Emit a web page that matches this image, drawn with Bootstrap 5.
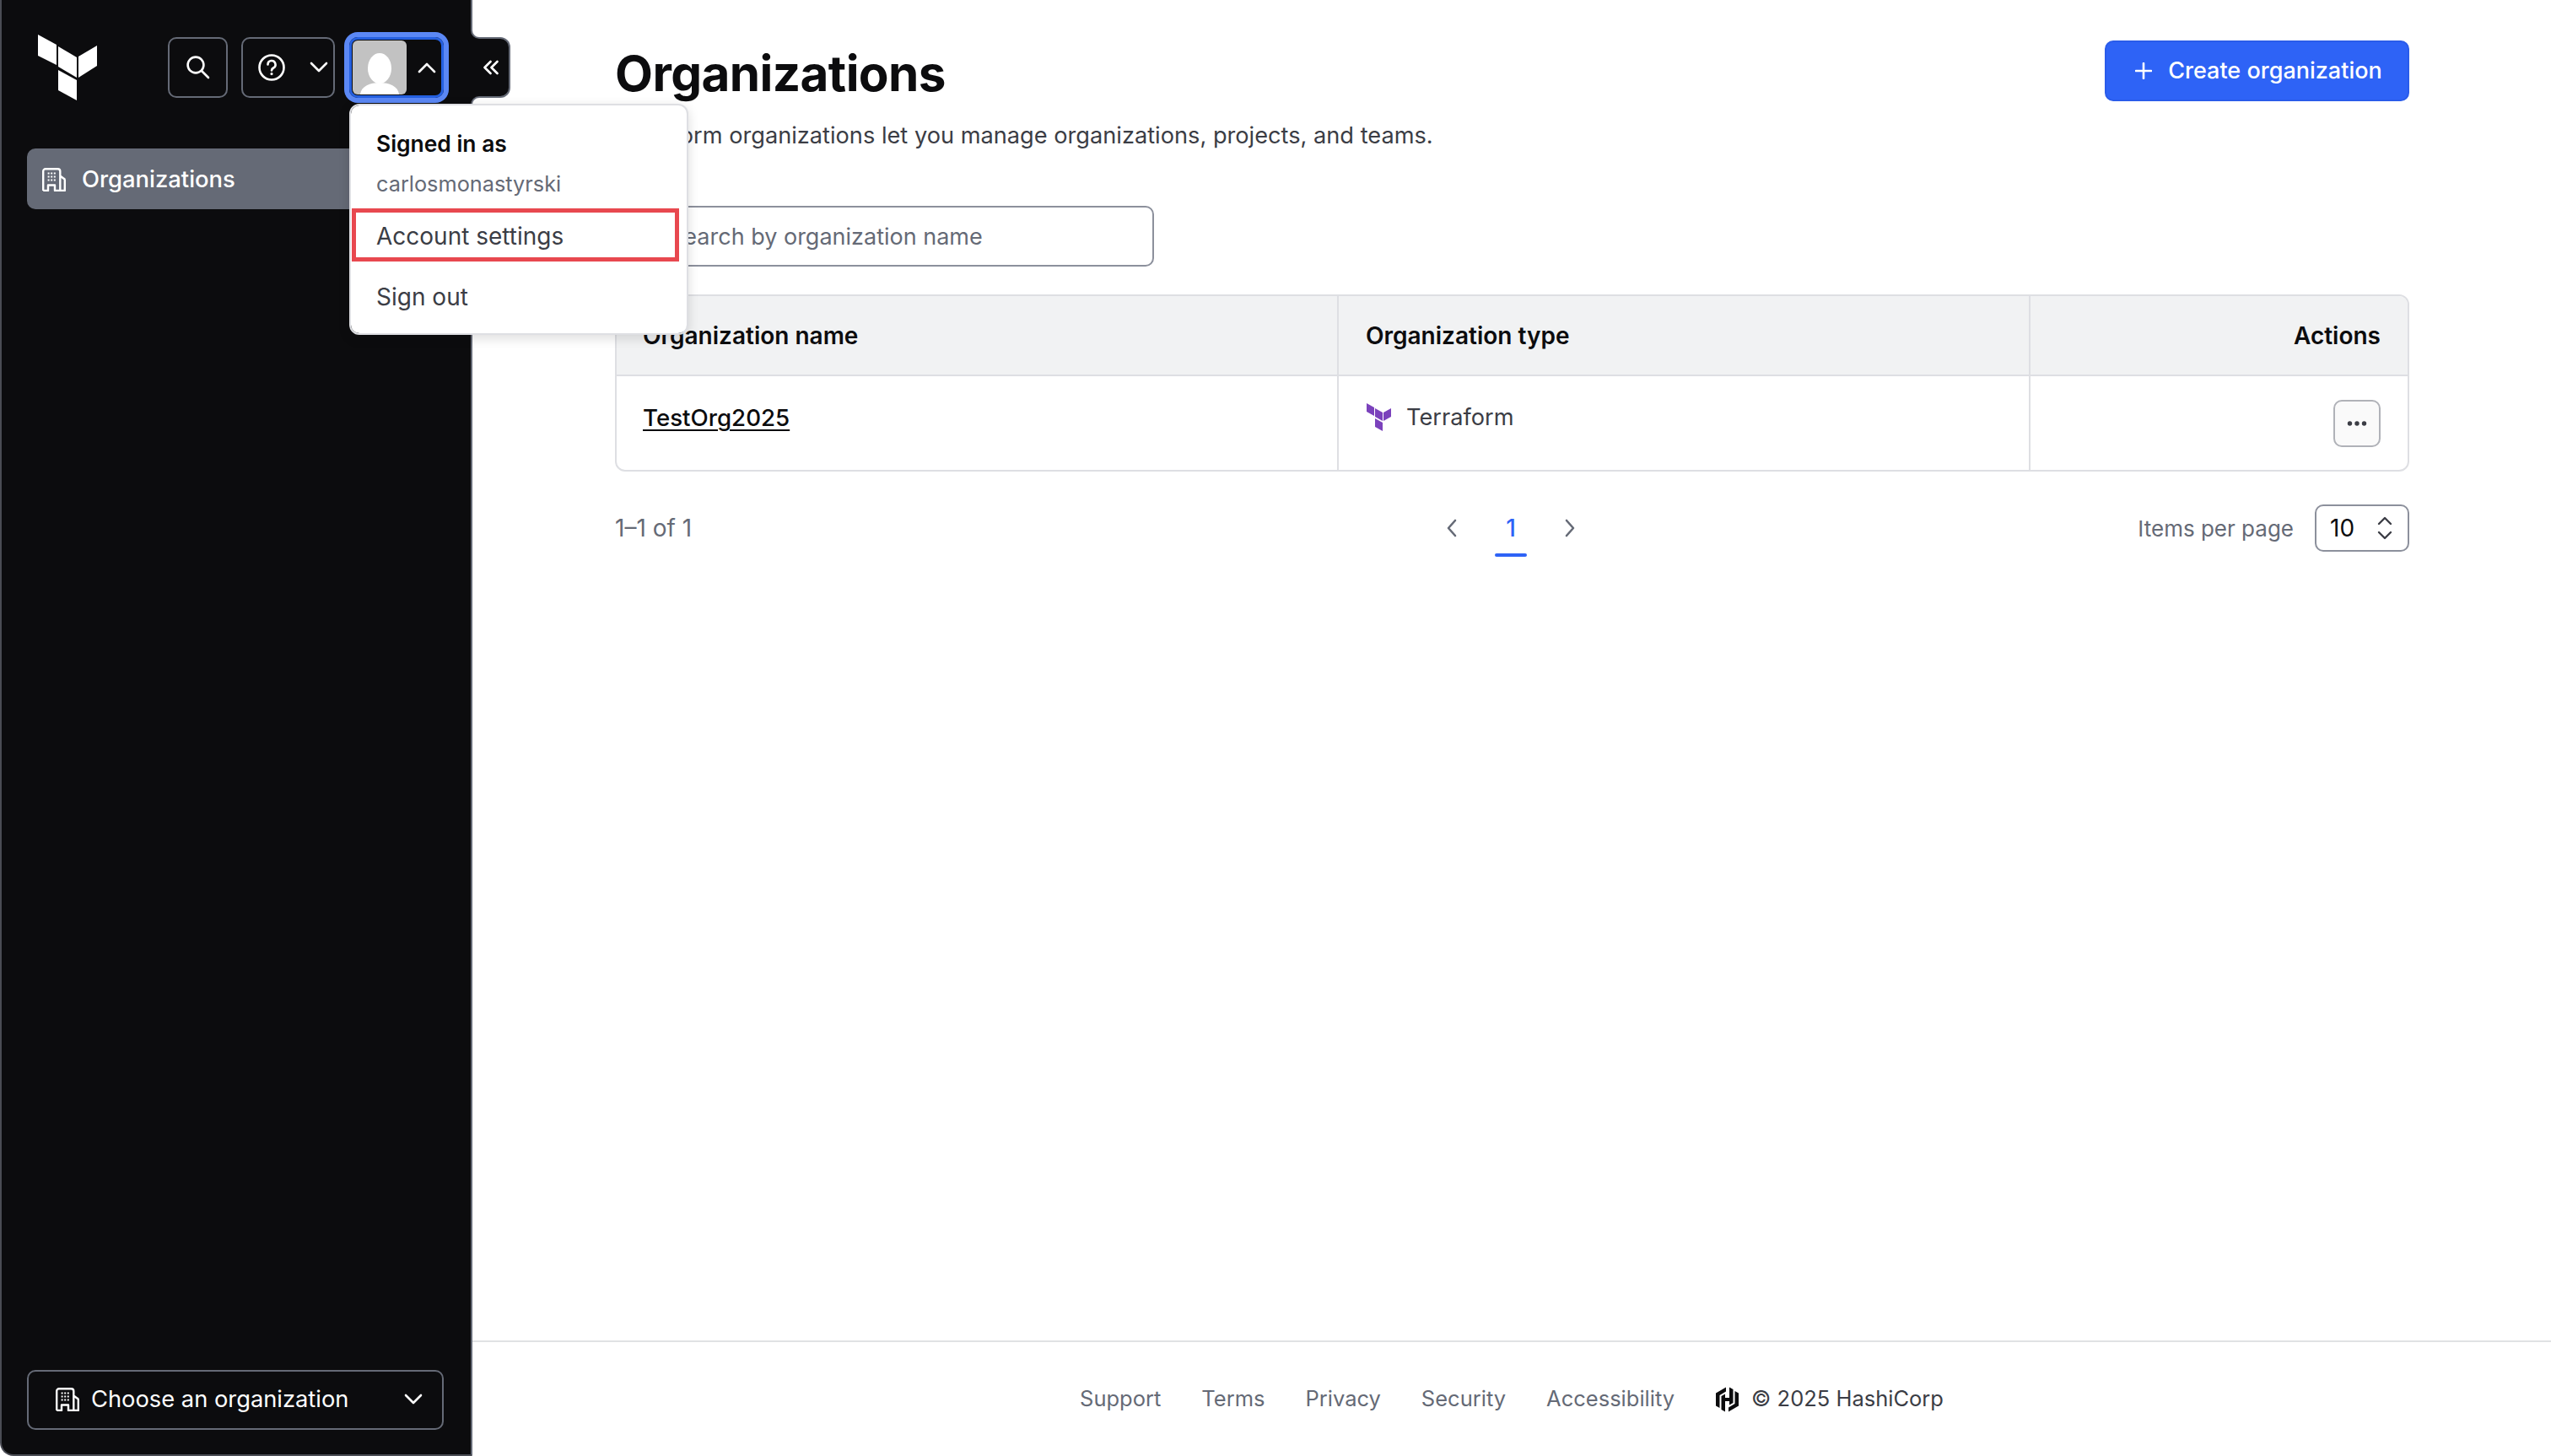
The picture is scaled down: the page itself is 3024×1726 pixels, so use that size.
<!DOCTYPE html>
<html lang="en">
<head>
<meta charset="utf-8">
<title>Organizations</title>
<link rel="stylesheet" href="https://cdn.jsdelivr.net/npm/bootstrap@5.3.0/dist/css/bootstrap.min.css">
<style>
html,body{height:100%;}
body{font-family:Inter,"Liberation Sans",sans-serif;font-size:28px;color:#3b3d45;background:#fff;}
.shell{height:1726px;overflow:hidden;}
.side{width:560px;flex:0 0 560px;background:#0c0c0e;border-left:2px solid #4a4c54;border-right:2px solid #656a76;border-bottom:2px solid #4a4c54;border-bottom-left-radius:16px;padding:38px 32px 29px 30px;position:relative;color:#fff;}
.side-head{height:84px;}
.brand-logo{width:84px;height:84px;margin-right:83px;flex:none;}
.tool{height:72px;border:2px solid #656a76;border-radius:10px;background:transparent;padding:0;color:#fff;}
.tool-search{width:71px;}
.tool-help{width:111px;margin-left:16px;padding:0 5px 0 18px;}
.tool-user{width:112px;margin-left:17px;border:3px solid #2560e0;box-shadow:0 0 0 6px #5b88f5;padding:1px 5px 1px 1px;}
.avatar{width:64px;height:64px;border-radius:6px;display:block;}
.nav-current{height:72px;margin-top:54px;background:#656a76;border-radius:10px;padding:2px 18px 0;gap:19px;color:#fff;font-weight:500;font-size:27.4px;}
.org-pick{height:71px;border:2px solid #656a76;border-radius:10px;padding:0 22px 1px 32px;color:#fff;background:transparent;font-size:27.3px;font-weight:400;gap:14px;}
.org-pick:hover{color:#fff;border-color:#656a76;}
.collapse-tab{position:absolute;left:558px;top:44px;width:47px;height:72px;background:#0c0c0e;border:2px solid #656a76;border-left:0;border-radius:0 12px 12px 0;z-index:3;padding-left:2px;}
.notch{position:absolute;left:558px;width:10px;height:10px;background:#0c0c0e;z-index:4;}
.notch::after{content:"";position:absolute;inset:0;background:#fff;border-left:2px solid #656a76;}
.notch-a{top:36px;}.notch-a::after{border-bottom:2px solid #656a76;border-bottom-left-radius:10px;}
.notch-b{top:114px;}.notch-b::after{border-top:2px solid #656a76;border-top-left-radius:10px;}
.page-wrap{min-width:0;}
.page-body{padding:48px 168px 0 169px;}
.page-title{font-size:58.4px;font-weight:700;line-height:78px;color:#0c0c0e;letter-spacing:-.6px;margin:0;}
.page-sub{font-size:27.2px;line-height:40px;margin:15px 0 0;color:#3b3d45;}
.btn-create{height:72px;width:361px;background:#2e63f6;border:2px solid #2a5cea;border-radius:10px;color:#fff;font-size:27px;font-weight:500;padding:0 0 0 4px;gap:19px;}
.btn-create:hover{background:#2e63f6;color:#fff;}
.search-box{width:639px;height:72px;margin-top:63px;}
.search-box .form-control{height:72px;border:2px solid #8c909c;border-radius:10px;padding:0 20px 0 62px;font-size:27px;color:#3b3d45;box-shadow:none;}
.search-box .form-control::placeholder{color:#656a76;}
.search-glyph{position:absolute;left:18px;top:20px;}
.data-wrap{margin-top:33px;border:2px solid #dedfe3;border-radius:12px;overflow:hidden;}
.data-wrap .table{margin:0;table-layout:fixed;font-size:28px;--bs-table-border-color:#dedfe3;}
.col-name{width:855px;}
.col-type{width:820px;}
.data-wrap th{background:#f1f2f3;color:#0c0c0e;font-weight:600;height:94px;padding:0 32px;vertical-align:middle;border-bottom:2px solid #dedfe3;}
.data-wrap td{height:112px;padding:28px 32px 0;vertical-align:top;border-bottom:0;color:#3b3d45;}
.data-wrap th:first-child,.data-wrap td:first-child{padding-left:31px;}
.data-wrap th + th,.data-wrap td + td{border-left:2px solid #dedfe3;}
.org-link{display:inline-block;line-height:38px;color:#0c0c0e;font-weight:500;font-size:27.7px;text-decoration-thickness:2px;text-underline-offset:4px;}
.type-name{font-size:27.2px;padding-top:1px;}
.type-mark{width:32px;height:34px;margin-right:16px;flex:none;}
.more-btn{width:56px;height:56px;padding:0;margin-top:-1px;border:2px solid #b0b2b8;border-radius:10px;background:#fafafa;}
.pager{margin-top:35px;height:64px;color:#656a76;position:relative;}
.pager-nums{position:absolute;left:985px;top:0;height:64px;}
.pager-num{width:38px;margin:0 44px;height:64px;line-height:64px;text-align:center;color:#2e63f6;font-weight:500;position:relative;}
.pager-num::after{content:"";position:absolute;left:0;right:0;bottom:-2px;height:4px;border-radius:2px;background:#2e63f6;}
.per-label{font-size:26px;}
.per-select{width:112px;height:56px;border:2px solid #8c909c;border-radius:10px;margin-left:25px;padding:0 18px 0 16px;color:#0c0c0e;}
.site-foot{margin-top:auto;height:137px;border-top:2px solid #e0e2e4;gap:48px;color:#656a76;font-size:25.5px;}
.site-foot a{color:#656a76;text-decoration:none;}
.copy-note{color:#3b3d45;gap:14px;}
.acct-menu{position:absolute;left:414px;top:123px;width:402px;height:274px;padding:0;border:2px solid #dedfe3;border-radius:12px;box-shadow:0 4px 14px rgba(12,12,14,.14);font-size:28px;z-index:5;}
.acct-who{padding:26px 30px 0;height:122px;}
.acct-label{font-weight:600;color:#0c0c0e;line-height:38px;font-size:26.4px;}
.acct-name{color:#656a76;line-height:38px;margin-top:10px;font-size:25.3px;}
.acct-item{font-size:28px;padding:0 0 0 30px;color:#3b3d45;line-height:62px;}
.acct-hot{margin:0 9px 0 1px;width:388px;border:5px solid #e8484f;line-height:57px;padding-left:24px;height:63px;}
.acct-hot + .acct-item{margin-top:11px;height:62px;}
</style>
</head>
<body>
<div class="shell d-flex">
  <aside class="side d-flex flex-column">
    <div class="side-head d-flex align-items-center">
      <svg class="brand-logo" viewBox="0 0 84 84"><g fill="#fff" transform="translate(-32 -38)"><polygon points="45,41 67,53 67,77 45,66"/><polygon points="69,55 91,68 91,92 69,79"/><polygon points="93,67 115,54 115,78 93,92"/><polygon points="69,83 91,95 91,119 69,107"/></g></svg>
      <button class="tool tool-search d-flex align-items-center justify-content-center" aria-label="Search"><svg width="32" height="32" viewBox="0 0 32 32" fill="none" stroke="#fff" stroke-width="2.6" stroke-linecap="round"><circle cx="13" cy="13" r="9.4"/><line x1="20" y1="20" x2="28" y2="28"/></svg></button>
      <button class="tool tool-help d-flex align-items-center justify-content-between" aria-label="Help">
        <svg width="32" height="32" viewBox="0 0 32 32" fill="none" stroke="#fff" stroke-width="2.6" stroke-linecap="round"><circle cx="16" cy="16" r="14.5"/><path d="M11.5 12.5a4.5 4.5 0 1 1 6.6 4c-1.4.8-2.1 1.6-2.1 3"/><circle cx="16" cy="23.6" r="1" fill="#fff" stroke-width="1.2"/></svg>
        <svg width="24" height="24" viewBox="0 0 24 24" fill="none" stroke="#fff" stroke-width="2.6" stroke-linecap="round" stroke-linejoin="round"><path d="M3 7l9 9 9-9"/></svg>
      </button>
      <button class="tool tool-user d-flex align-items-center justify-content-between" aria-label="User">
        <svg class="avatar" viewBox="0 0 64 64"><rect width="64" height="64" fill="#c2c2c2"/><ellipse cx="32" cy="33" rx="14" ry="18" fill="#fff"/><path d="M9 64c1-10 12-14 23-14s22 4 23 14z" fill="#fff"/></svg>
        <svg width="24" height="24" viewBox="0 0 24 24" fill="none" stroke="#fff" stroke-width="2.6" stroke-linecap="round" stroke-linejoin="round"><path d="M3 17l9-9 9 9"/></svg>
      </button>
    </div>
    <div class="nav-current d-flex align-items-center">
      <svg width="28" height="28" viewBox="0 0 28 28" fill="none" stroke="#fff" stroke-width="2.4" stroke-linejoin="round"><path d="M1.2 27V4A2.8 2.8 0 0 1 4 1.2h14.5A2.8 2.8 0 0 1 21.3 4v23M21.3 9.5l4 3a2 2 0 0 1 1.5 2V27h-5.5M1.2 27H7v-6.5h8V27h6.3"/><g fill="#fff" stroke="none"><rect x="6.6" y="5.5" width="2" height="2"/><rect x="10.2" y="5.5" width="2" height="2"/><rect x="13.8" y="5.5" width="2" height="2"/><rect x="6.6" y="9.5" width="2" height="2"/><rect x="10.2" y="9.5" width="2" height="2"/><rect x="13.8" y="9.5" width="2" height="2"/><rect x="6.6" y="13.5" width="2" height="2"/><rect x="10.2" y="13.5" width="2" height="2"/><rect x="13.8" y="13.5" width="2" height="2"/></g></svg>
      <span>Organizations</span>
    </div>
    <button class="btn org-pick d-flex align-items-center mt-auto w-100">
      <svg width="28" height="28" viewBox="0 0 28 28" fill="none" stroke="#fff" stroke-width="2.4" stroke-linejoin="round"><path d="M1.2 27V4A2.8 2.8 0 0 1 4 1.2h14.5A2.8 2.8 0 0 1 21.3 4v23M21.3 9.5l4 3a2 2 0 0 1 1.5 2V27h-5.5M1.2 27H7v-6.5h8V27h6.3"/><g fill="#fff" stroke="none"><rect x="6.6" y="5.5" width="2" height="2"/><rect x="10.2" y="5.5" width="2" height="2"/><rect x="13.8" y="5.5" width="2" height="2"/><rect x="6.6" y="9.5" width="2" height="2"/><rect x="10.2" y="9.5" width="2" height="2"/><rect x="13.8" y="9.5" width="2" height="2"/><rect x="6.6" y="13.5" width="2" height="2"/><rect x="10.2" y="13.5" width="2" height="2"/><rect x="13.8" y="13.5" width="2" height="2"/></g></svg>
      <span>Choose an organization</span>
      <svg class="ms-auto" width="24" height="24" viewBox="0 0 24 24" fill="none" stroke="#fff" stroke-width="2.6" stroke-linecap="round" stroke-linejoin="round"><path d="M3 7l9 9 9-9"/></svg>
    </button>
  </aside>
  <span class="notch notch-a"></span><span class="notch notch-b"></span>
  <div class="collapse-tab d-flex align-items-center justify-content-center"><svg width="18" height="18" viewBox="0 0 18 18" fill="none" stroke="#fff" stroke-width="2.6" stroke-linecap="round" stroke-linejoin="round"><path d="M8.5 2l-7 7 7 7M16.5 2l-7 7 7 7"/></svg></div>
  <div class="page-wrap flex-grow-1 d-flex flex-column">
    <main class="page-body">
      <div class="d-flex justify-content-between align-items-start">
        <h1 class="page-title">Organizations</h1>
        <a class="btn btn-create d-flex align-items-center justify-content-center"><svg width="20" height="20" viewBox="0 0 20 20" stroke="#fff" stroke-width="2.6" stroke-linecap="round"><path d="M10 1v18M1 10h18"/></svg><span>Create organization</span></a>
      </div>
      <p class="page-sub">Terraform organizations let you manage organizations, projects, and teams.</p>
      <div class="search-box position-relative">
        <svg class="search-glyph" width="32" height="32" viewBox="0 0 32 32" fill="none" stroke="#656a76" stroke-width="2.6" stroke-linecap="round"><circle cx="13" cy="13" r="9.4"/><line x1="20" y1="20" x2="28" y2="28"/></svg>
        <input class="form-control" placeholder="Search by organization name">
      </div>
      <div class="data-wrap">
        <table class="table align-top">
          <colgroup><col class="col-name"><col class="col-type"><col></colgroup>
          <thead><tr><th>Organization name</th><th>Organization type</th><th class="text-end">Actions</th></tr></thead>
          <tbody><tr>
            <td><a class="org-link" href="#">TestOrg2025</a></td>
            <td><div class="d-flex align-items-center"><svg class="type-mark" viewBox="0 0 32 34"><g fill="#7b42bc"><polygon points="1,0 10,5 10,15 1,10"/><polygon points="11,6 20,11 20,21 11,16"/><polygon points="21,11 30,6 30,16 21,21"/><polygon points="11,18 20,23 20,33 11,28"/></g></svg><span class="type-name">Terraform</span></div></td>
            <td class="text-end"><button class="more-btn d-inline-flex align-items-center justify-content-center" aria-label="More"><svg width="24" height="6" viewBox="0 0 24 6" fill="#3b3d45"><circle cx="3.5" cy="3" r="2.7"/><circle cx="12" cy="3" r="2.7"/><circle cx="20.5" cy="3" r="2.7"/></svg></button></td>
          </tr></tbody>
        </table>
      </div>
      <div class="pager d-flex align-items-center justify-content-between">
        <span>1–1 of 1</span>
        <div class="pager-nums d-flex align-items-center">
          <svg width="14" height="22" viewBox="0 0 14 22" fill="none" stroke="#656a76" stroke-width="2.6" stroke-linecap="round" stroke-linejoin="round"><path d="M11 2l-8 9 8 9"/></svg>
          <span class="pager-num">1</span>
          <svg width="14" height="22" viewBox="0 0 14 22" fill="none" stroke="#656a76" stroke-width="2.6" stroke-linecap="round" stroke-linejoin="round"><path d="M3 2l8 9-8 9"/></svg>
        </div>
        <div class="d-flex align-items-center">
          <span class="per-label">Items per page</span>
          <div class="per-select d-flex align-items-center justify-content-between"><span>10</span><svg width="18" height="30" viewBox="0 0 18 30" fill="none" stroke="#3b3d45" stroke-width="2.4" stroke-linecap="round" stroke-linejoin="round"><path d="M2 10l7-7 7 7M2 20l7 7 7-7"/></svg></div>
        </div>
      </div>
    </main>
    <footer class="site-foot d-flex align-items-center justify-content-center">
      <a href="#">Support</a><a href="#">Terms</a><a href="#">Privacy</a><a href="#">Security</a><a href="#">Accessibility</a>
      <span class="copy-note d-flex align-items-center">
        <svg width="29" height="30" viewBox="0 0 28 30"><g fill="#0c0c0e"><polygon points="12.5,.5 .5,7.5 .5,22.5 5,25 5,10 12.5,5.5"/><polygon points="7,11 11.5,8.5 11.5,13 16.5,13 16.5,.5 21,3 21,19 16.5,21.5 16.5,17 11.5,17 11.5,29.5 7,27"/><polygon points="15.5,29.5 27.5,22.5 27.5,7.5 23,5 23,20 15.5,24.5"/></g></svg>
        <span>© 2025 HashiCorp</span>
      </span>
    </footer>
  </div>
</div>
<div class="dropdown-menu show acct-menu">
  <div class="acct-who"><div class="acct-label">Signed in as</div><div class="acct-name">carlosmonastyrski</div></div>
  <a class="dropdown-item acct-item acct-hot" href="#">Account settings</a>
  <a class="dropdown-item acct-item" href="#">Sign out</a>
</div>
<script src="https://cdn.jsdelivr.net/npm/bootstrap@5.3.0/dist/js/bootstrap.bundle.min.js"></script>
</body>
</html>
